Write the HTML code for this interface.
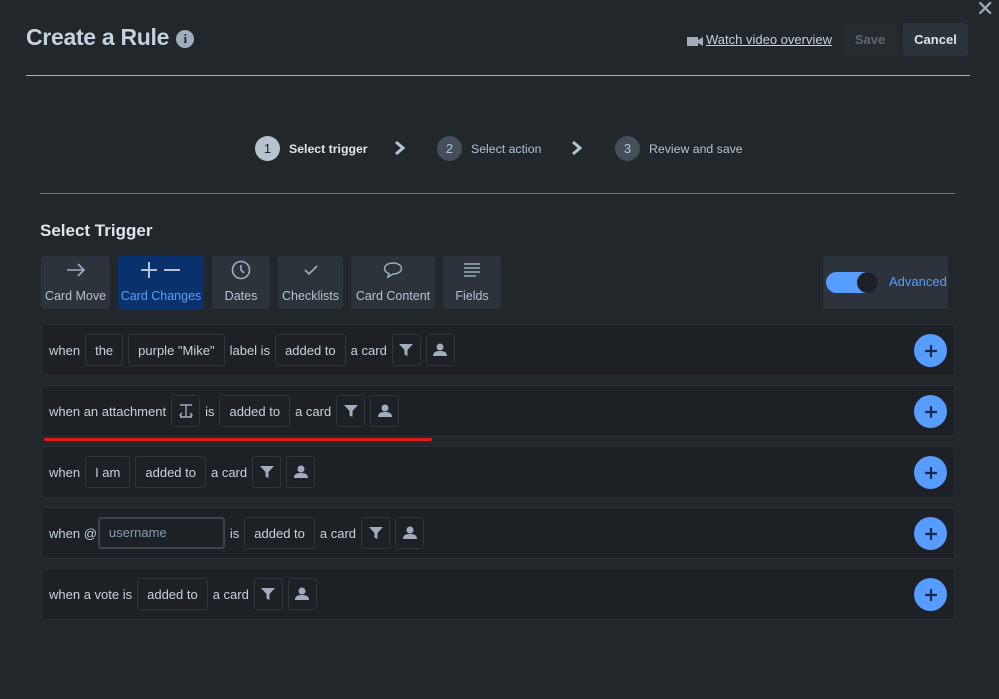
<!DOCTYPE html>
<html><head><meta charset="utf-8"><style>
*{box-sizing:border-box;margin:0;padding:0}
body{width:999px;height:699px;background:#22272b;font-family:"Liberation Sans",Arial,sans-serif;color:#b6c2cf;position:relative;overflow:hidden}
.abs{position:absolute}
h1{position:absolute;left:26px;top:24px;font-size:23px;font-weight:bold;color:#c7d1db;letter-spacing:-0.3px}
.info{display:inline-block;width:18px;height:18px;border-radius:50%;background:#9fadbc;color:#22272b;font-size:13px;text-align:center;line-height:18px;font-family:"Liberation Serif",serif;font-weight:bold;vertical-align:2px;margin-left:7px}
.hr{position:absolute;height:1px;background:#a6b0ba}
.btn{position:absolute;top:23px;height:33px;border-radius:3px;background:#2c333a;font-size:13px;font-weight:bold;text-align:center;line-height:33px}
.step{position:absolute;top:136px;font-size:12.3px;display:flex;align-items:center}
.circ{width:25px;height:25px;border-radius:50%;text-align:center;line-height:25px;font-size:13px;margin-right:9px}
.chev{position:absolute;top:140px}
.tab{position:absolute;top:256px;height:53px;background:#2c333a;border-radius:3px;font-size:12.5px;text-align:center;color:#b6c2cf;white-space:nowrap}
.tab .ic{height:28px;display:flex;align-items:center;justify-content:center}
.tab .lb{position:absolute;bottom:6px;left:0;right:0}
.row{position:absolute;left:41px;width:914px;height:52px;background:#1d2125;border:1px solid #282e33;border-radius:3px;display:flex;align-items:center;padding-left:7px;font-size:13px;color:#c7d1db}
.row>*{margin-right:5px}
.chip{height:32px;border:1px solid #2e353b;border-radius:3px;padding:0 9px;line-height:31px;color:#c7d1db}
.ib{width:29px;height:32px;border:1px solid #2e353b;border-radius:3px;display:flex;align-items:center;justify-content:center}
.plus{position:absolute;right:7px;top:9px;width:33px;height:33px;border-radius:50%;background:#579dff;display:flex;align-items:center;justify-content:center;margin:0}
</style></head><body>
<h1>Create a Rule<span class="info">i</span></h1>
<div class="abs" style="left:687px;top:34px;width:15px;height:11px"><svg width="16" height="11"><rect x="0" y="1" width="11" height="9" fill="#9fadbc"/><path d="M11 4L16 1V10L11 7Z" fill="#9fadbc"/></svg></div>
<div class="abs" style="left:706px;top:32px;font-size:13px;color:#c7d1db;text-decoration:underline">Watch video overview</div>
<div class="btn" style="left:843px;width:54px;color:#5d6770;background:#262b30">Save</div>
<div class="btn" style="left:903px;width:65px;color:#dee4ea">Cancel</div>
<div class="abs" style="left:976px;top:-4px;font-size:22px;color:#9fadbc">✕</div>
<div class="hr" style="left:26px;width:944px;top:75px"></div>

<div class="step" style="left:255px"><div class="circ" style="background:#b6c2cf;color:#22272b">1</div><b style="color:#dee4ea">Select trigger</b></div>
<svg class="chev" style="left:394px" width="12" height="16"><path d="M2 2L9 8L2 14" stroke="#b6c2cf" stroke-width="3" fill="none"/></svg>
<div class="step" style="left:437px"><div class="circ" style="background:#454f59;color:#b6c2cf">2</div><span>Select action</span></div>
<svg class="chev" style="left:571px" width="12" height="16"><path d="M2 2L9 8L2 14" stroke="#b6c2cf" stroke-width="3" fill="none"/></svg>
<div class="step" style="left:615px"><div class="circ" style="background:#454f59;color:#b6c2cf">3</div><span>Review and save</span></div>
<div class="hr" style="left:40px;width:915px;top:193px;background:#6b7681"></div>

<div class="abs" style="left:40px;top:221px;font-size:17px;font-weight:bold;color:#dee4ea">Select Trigger</div>

<div class="tab" style="left:41px;width:69px"><div class="ic"><svg width="20" height="16"><path d="M1 8H18M12 2L18 8L12 14" stroke="#9fadbc" stroke-width="1.6" fill="none"/></svg></div><div class="lb">Card Move</div></div>
<div class="tab" style="left:118px;width:86px;background:#09326c;color:#579dff"><div class="ic"><svg width="42" height="18"><path d="M9 1V17M1 9H17M24 9H40" stroke="#b6c2cf" stroke-width="2" fill="none"/></svg></div><div class="lb">Card Changes</div></div>
<div class="tab" style="left:212px;width:58px"><div class="ic"><svg width="20" height="20"><circle cx="10" cy="10" r="8.5" stroke="#9fadbc" stroke-width="1.6" fill="none"/><path d="M10 5V10L13 13" stroke="#9fadbc" stroke-width="1.6" fill="none"/></svg></div><div class="lb">Dates</div></div>
<div class="tab" style="left:278px;width:65px"><div class="ic"><svg width="14" height="12"><path d="M1 6L5 10L13 2" stroke="#9fadbc" stroke-width="1.6" fill="none"/></svg></div><div class="lb">Checklists</div></div>
<div class="tab" style="left:351px;width:84px"><div class="ic"><svg width="20" height="18"><path d="M10 2C5 2 1.5 4.5 1.5 7.5C1.5 10 4 12 6 12.5L5 16L10 13C15 13 18.5 10.5 18.5 7.5C18.5 4.5 15 2 10 2Z" stroke="#9fadbc" stroke-width="1.5" fill="none"/></svg></div><div class="lb">Card Content</div></div>
<div class="tab" style="left:443px;width:58px"><div class="ic"><svg width="18" height="14"><path d="M1 1H17M1 5H17M1 9H17M1 13H13" stroke="#9fadbc" stroke-width="1.5"/></svg></div><div class="lb">Fields</div></div>

<div class="abs" style="left:823px;top:256px;width:125px;height:53px;background:#2c333a;border-radius:3px">
<div class="abs" style="left:3px;top:16px;width:52px;height:21px;border-radius:11px;background:#579dff"></div>
<div class="abs" style="left:34px;top:16px;width:21px;height:21px;border-radius:50%;background:#1d2125"></div>
<div class="abs" style="left:66px;top:18px;font-size:13px;color:#579dff">Advanced</div>
</div>

<svg width="0" height="0" style="position:absolute"><defs>
<symbol id="f" viewBox="0 0 14 14"><path d="M0 1H14L8.5 7V13L5.5 11.5V7Z" fill="#9fadbc"/></symbol>
<symbol id="p" viewBox="0 0 14 14"><circle cx="7" cy="4" r="3.5" fill="#9fadbc"/><path d="M0 13C0 9 3 8 7 8C11 8 14 9 14 13Z" fill="#9fadbc"/></symbol>
<symbol id="pl" viewBox="0 0 12 12"><path d="M6 0V12M0 6H12" stroke="#172b4d" stroke-width="2.2"/></symbol>
</defs></svg>

<div class="row" style="top:324px"><span>when</span><span class="chip">the</span><span class="chip">purple "Mike"</span><span>label is</span><span class="chip">added to</span><span>a card</span><span class="ib"><svg width="14" height="14"><use href="#f"/></svg></span><span class="ib"><svg width="14" height="14"><use href="#p"/></svg></span><div class="plus"><svg width="12" height="12"><use href="#pl"/></svg></div></div>
<div class="row" style="top:385px"><span>when an attachment</span><span class="ib"><svg width="14" height="14"><path d="M1 1H13M7 1V13M1 13H13M3 9L1 11L3 13M11 9L13 11L11 13" stroke="#9fadbc" stroke-width="1.4" fill="none"/></svg></span><span>is</span><span class="chip">added to</span><span>a card</span><span class="ib"><svg width="14" height="14"><use href="#f"/></svg></span><span class="ib"><svg width="14" height="14"><use href="#p"/></svg></span><div class="plus"><svg width="12" height="12"><use href="#pl"/></svg></div></div>
<div class="abs" style="left:44px;top:438px;width:388px;height:3px;background:#e01b1b;border-radius:2px"></div>
<div class="row" style="top:446px"><span>when</span><span class="chip">I am</span><span class="chip">added to</span><span>a card</span><span class="ib"><svg width="14" height="14"><use href="#f"/></svg></span><span class="ib"><svg width="14" height="14"><use href="#p"/></svg></span><div class="plus"><svg width="12" height="12"><use href="#pl"/></svg></div></div>
<div class="row" style="top:507px"><span style="margin-right:1px">when @</span><span class="chip" style="width:127px;border:2px solid #3b444c;color:#8c9bab;line-height:28px">username</span><span>is</span><span class="chip">added to</span><span>a card</span><span class="ib"><svg width="14" height="14"><use href="#f"/></svg></span><span class="ib"><svg width="14" height="14"><use href="#p"/></svg></span><div class="plus"><svg width="12" height="12"><use href="#pl"/></svg></div></div>
<div class="row" style="top:568px"><span>when a vote is</span><span class="chip">added to</span><span>a card</span><span class="ib"><svg width="14" height="14"><use href="#f"/></svg></span><span class="ib"><svg width="14" height="14"><use href="#p"/></svg></span><div class="plus"><svg width="12" height="12"><use href="#pl"/></svg></div></div>
</body></html>
